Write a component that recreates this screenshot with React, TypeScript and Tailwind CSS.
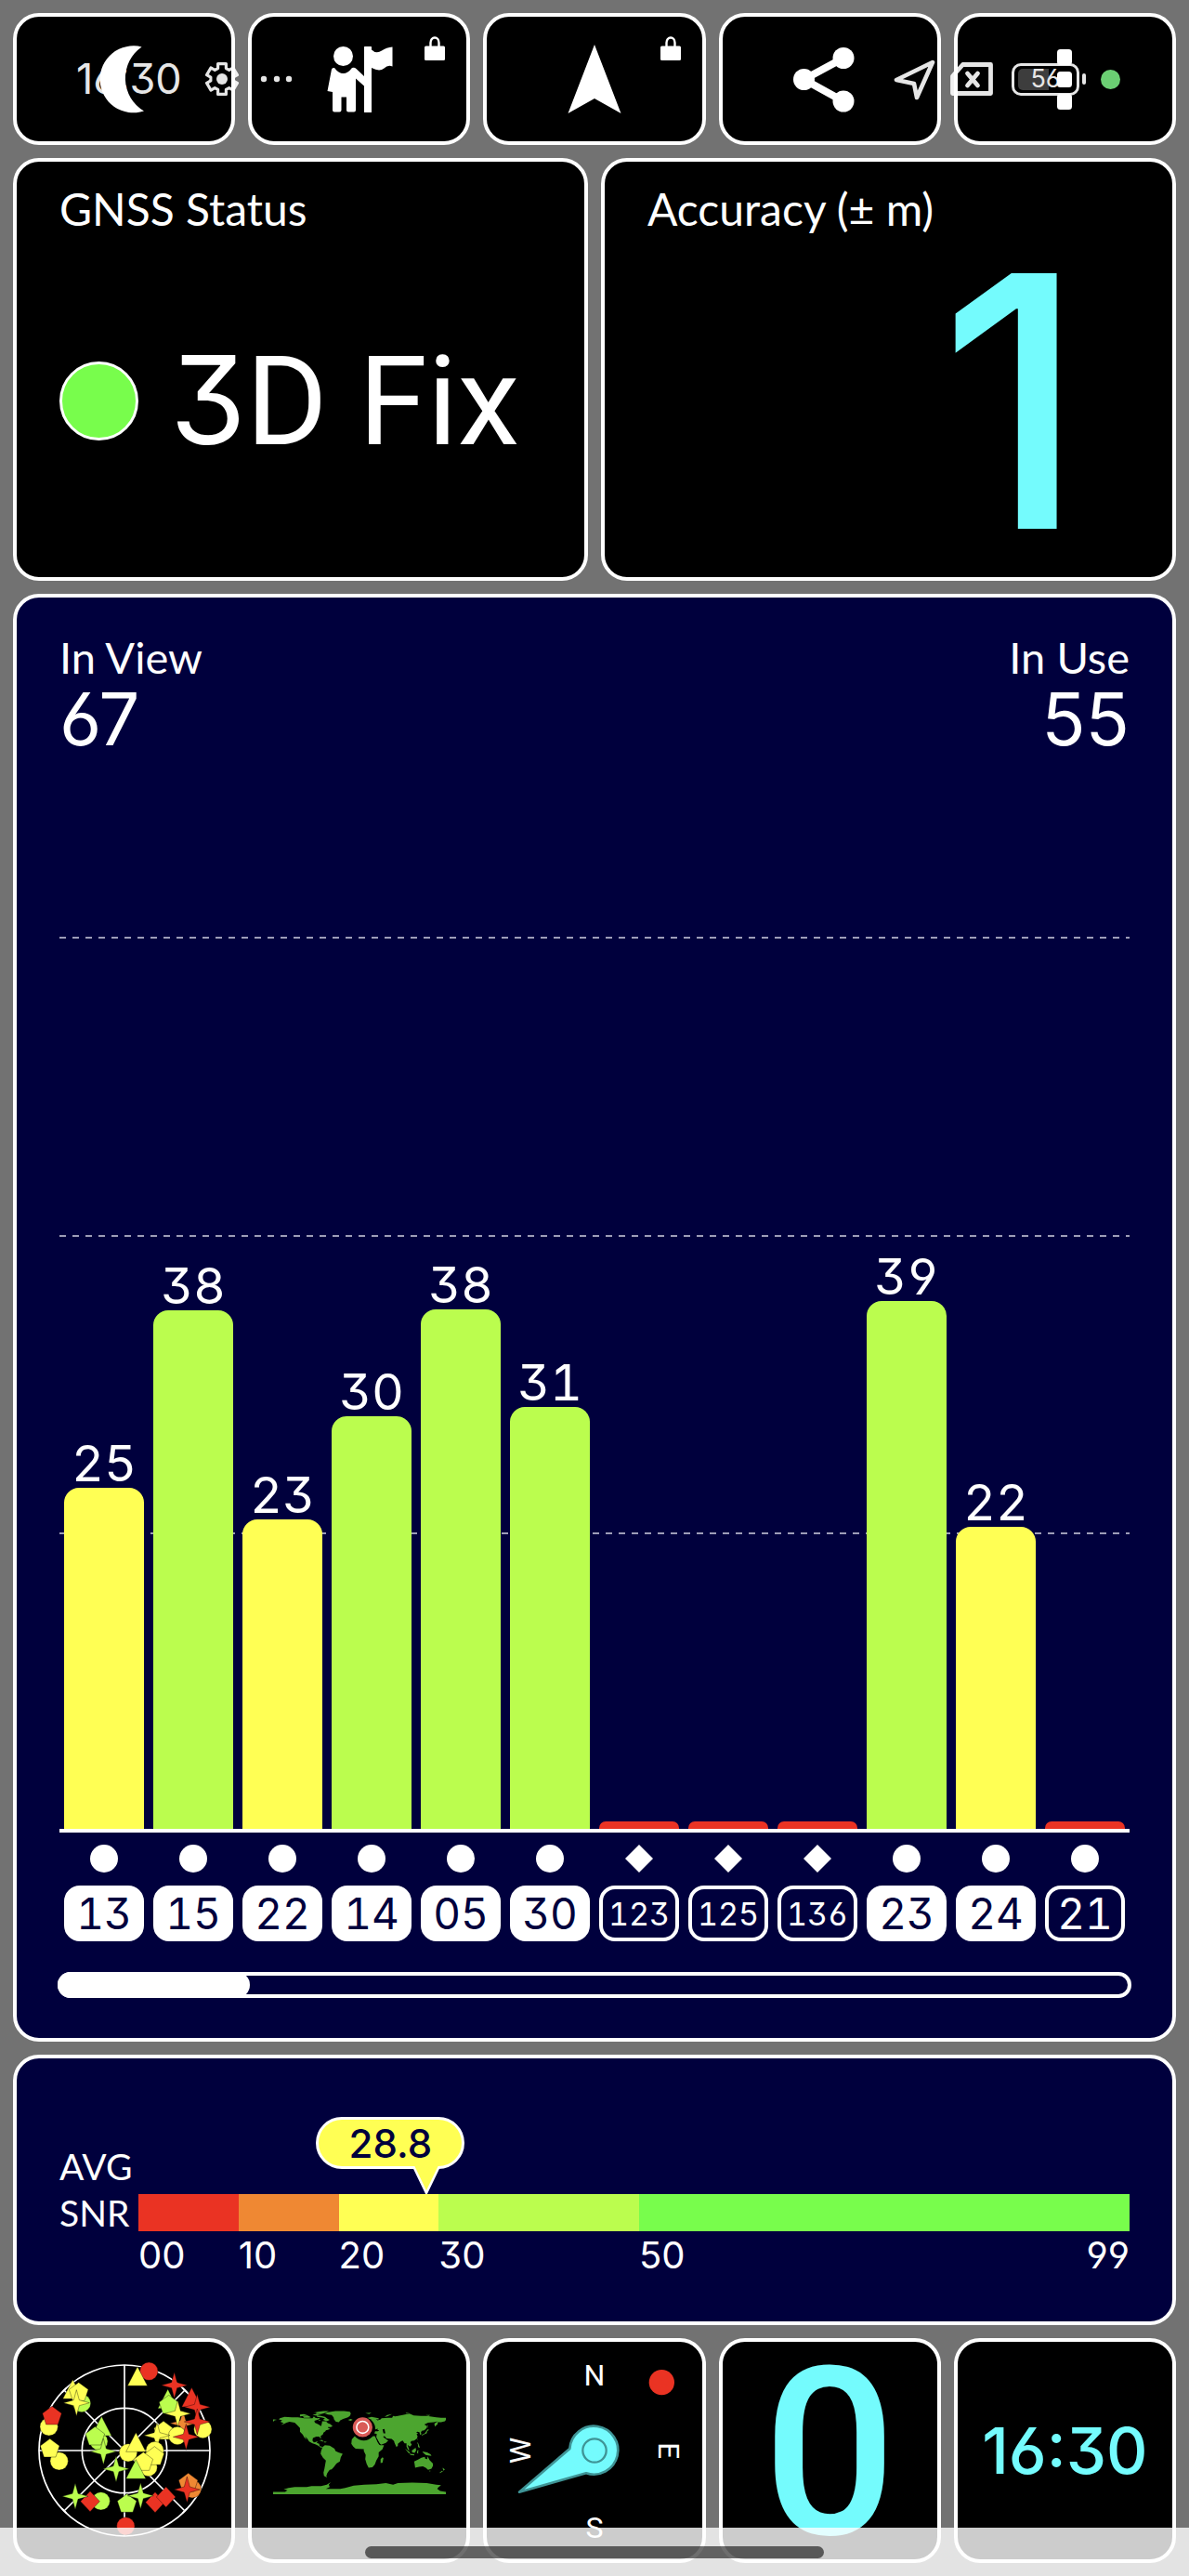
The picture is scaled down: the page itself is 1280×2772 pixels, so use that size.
import React from "react";

const DIGITS = "font-['Inter',sans-serif] [font-feature-settings:'cv09','cv03','cv04']";
const TABULAR = "font-['Inter',sans-serif] [font-feature-settings:'cv09','cv03','cv04','tnum']";

const RED = "#ea3323";
const ORANGE = "#ef8833";
const YELLOW = "#ffff54";
const LIME = "#bbfd4e";

type Sat = { id: string; snr?: number; height: number; tone: string; used: boolean; diamond?: boolean };

const sats: Sat[] = [
  { id: "13", snr: 25, height: 367, tone: "bg-[#ffff54]", used: true },
  { id: "15", snr: 38, height: 558, tone: "bg-[#bbfd4e]", used: true },
  { id: "22", snr: 23, height: 333, tone: "bg-[#ffff54]", used: true },
  { id: "14", snr: 30, height: 444, tone: "bg-[#bbfd4e]", used: true },
  { id: "05", snr: 38, height: 559, tone: "bg-[#bbfd4e]", used: true },
  { id: "30", snr: 31, height: 454, tone: "bg-[#bbfd4e]", used: true },
  { id: "123", height: 8, tone: "bg-[#ea3323]", used: false, diamond: true },
  { id: "125", height: 8, tone: "bg-[#ea3323]", used: false, diamond: true },
  { id: "136", height: 8, tone: "bg-[#ea3323]", used: false, diamond: true },
  { id: "23", snr: 39, height: 568, tone: "bg-[#bbfd4e]", used: true },
  { id: "24", snr: 22, height: 325, tone: "bg-[#ffff54]", used: true },
  { id: "21", height: 8, tone: "bg-[#ea3323]", used: false },
];

function Lock() {
  return (
    <svg className="absolute top-[21px] right-[22px] h-[27px] w-6" viewBox="0 0 24 27" aria-hidden="true">
      <path d="M7.5 12V7a4.5 5.5 0 0 1 9 0v5" fill="none" stroke="#fff" strokeWidth="2.4" />
      <rect x="1" y="10.5" width="22" height="15.5" rx="1.5" fill="#fff" />
    </svg>
  );
}

function TopTile({ label, locked, children }: { label: string; locked?: boolean; children: React.ReactNode }) {
  return (
    <button
      type="button"
      aria-label={label}
      className="relative flex h-[142px] items-center justify-center rounded-[28px] border-4 border-white bg-black"
    >
      {children}
      {locked && <Lock />}
    </button>
  );
}

function IconBox({ children }: { children: React.ReactNode }) {
  return (
    <svg className="size-[72px] overflow-visible" viewBox="0 0 72 72" fill="#fff" aria-hidden="true">
      {children}
    </svg>
  );
}

const gearPath =
  Array.from({ length: 6 }, (_, k) => {
    const p = (deg: number, r: number) => {
      const a = ((deg + k * 60 - 90) * Math.PI) / 180;
      return `${(Math.cos(a) * r).toFixed(2)} ${(Math.sin(a) * r).toFixed(2)}`;
    };
    return `${k ? "L" : "M"}${p(-21, 12.3)}L${p(-15, 17)}L${p(15, 17)}L${p(21, 12.3)}`;
  }).join("") + "Z";

function StatusBar() {
  return (
    <div className="pointer-events-none absolute inset-x-0 top-0 flex h-[170px] items-center justify-between pr-[74px] pl-[82px] opacity-90">
      <div className="flex items-center">
        <span className={`${DIGITS} w-[138px] text-[45px] leading-[56px] text-white`}>16:30</span>
        <svg className="size-[38px]" viewBox="-19 -19 38 38" aria-hidden="true">
          <path d={gearPath} fill="none" stroke="#fff" strokeWidth="3.2" strokeLinejoin="round" />
          <circle r="6" fill="#fff" />
        </svg>
        <svg className="ml-[22px] h-2 w-9" viewBox="0 0 36 8" fill="#fff" aria-hidden="true">
          <circle cx="4" cy="4" r="3.2" />
          <circle cx="18" cy="4" r="3.2" />
          <circle cx="31" cy="4" r="3.2" />
        </svg>
      </div>
      <div className="flex items-center">
        <svg className="h-[46px] w-[46px]" viewBox="0 0 46 46" fill="none" stroke="#fff" strokeWidth="4.6" strokeLinejoin="round" aria-hidden="true">
          <path d="M42 5 3 24l19 4 3 15z" />
        </svg>
        <svg className="ml-[14px] h-[38px] w-[48px]" viewBox="0 0 48 38" fill="none" stroke="#fff" strokeLinejoin="round" strokeLinecap="round" aria-hidden="true">
          <path d="M14.500 3.500H44.500V34.500H3.500V16z" strokeWidth="4.8" />
          <path d="m19.500 13 11 13m0-13-11 13" strokeWidth="4.8" />
        </svg>
        <div className="ml-[19px] flex items-center gap-[3px]">
          <div className="relative flex h-[35px] w-[73px] items-center justify-center rounded-[10px] border-[3px] border-white">
            <span className="absolute top-[3px] bottom-[3px] left-1 w-[33px] rounded-l-[5px] bg-[#444444]" />
            <span className={`${DIGITS} relative text-[27px] leading-7 text-white`}>56</span>
          </div>
          <span className="h-3 w-1 rounded-sm bg-white" />
        </div>
        <span className="ml-4 size-[21px] rounded-full bg-[#77e680]" />
      </div>
    </div>
  );
}

function StatusCard({ title, children }: { title: string; children: React.ReactNode }) {
  return (
    <section className="flex h-[455px] flex-col rounded-[28px] border-4 border-white bg-black px-[46px] pt-[23px] pb-[11px] text-white">
      <h2 className="text-[48px] leading-[56px]">{title}</h2>
      {children}
    </section>
  );
}

function SatColumn({ sat }: { sat: Sat }) {
  return (
    <li className="relative flex min-w-0 flex-1 flex-col">
      <div className="flex h-[1159px] flex-col justify-end border-b-4 border-white px-[5px]">
        {sat.snr && <span className={`${TABULAR} text-center text-[54px] leading-[52px] text-white`}>{sat.snr}</span>}
        <div
          className={`${sat.tone} ${sat.snr ? "rounded-t-[16px]" : "rounded-t-[7px]"}`}
          style={{ height: sat.height }}
        />
      </div>
      <svg className="mx-auto mt-[13px] size-[30px]" viewBox="0 0 30 30" fill="#fff" aria-hidden="true">
        {sat.diamond ? <path d="M15 0 30 15 15 30 0 15z" /> : <circle cx="15" cy="15" r="15" />}
      </svg>
      <div
        className={`${TABULAR} mx-[5px] mt-[14px] flex h-[60px] items-center justify-center rounded-[17px] border-4 border-white ${
          sat.used ? "bg-white text-[#00003d]" : "text-white"
        } ${sat.id.length > 2 ? "text-[34px]" : "text-[46px]"}`}
      >
        {sat.id}
      </div>
    </li>
  );
}

function GridLine({ className }: { className: string }) {
  return (
    <div
      className={`absolute inset-x-0 h-0.5 bg-[repeating-linear-gradient(90deg,#9d9db8_0_7px,transparent_7px_14px)] ${className}`}
    />
  );
}

const scale = [
  { from: "00", span: "flex-[10]", tone: "bg-[#ea3323]" },
  { from: "10", span: "flex-[10]", tone: "bg-[#ef8833]" },
  { from: "20", span: "flex-[10]", tone: "bg-[#ffff54]" },
  { from: "30", span: "flex-[20]", tone: "bg-[#bbfd4e]" },
  { from: "50", to: "99", span: "flex-[49]", tone: "bg-[#78fd4c]" },
];

type Shape = "circle" | "tri" | "pent" | "star" | "diamond";
const shapePaths: Record<Exclude<Shape, "circle">, string> = {
  tri: "M0-36 32 26H-32z",
  pent: "M0-31 31-8 19 28H-19L-31-8z",
  star: "M0-42 9-9 42 0 9 9 0 42-9 9-42 0-9-9z",
  diamond: "M0-33 31 0 0 33-31 0z",
};

const sky: [Shape, number, number, string][] = [
  ["circle", 480, 154, RED],
  ["tri", 443, 175, YELLOW],
  ["circle", 263, 257, LIME],
  ["tri", 234, 217, YELLOW],
  ["pent", 253, 221, YELLOW],
  ["star", 246, 256, YELLOW],
  ["circle", 157, 333, YELLOW],
  ["pent", 167, 298, RED],
  ["circle", 190, 444, YELLOW],
  ["pent", 160, 403, YELLOW],
  ["circle", 318, 380, LIME],
  ["tri", 327, 336, LIME],
  ["pent", 306, 364, LIME],
  ["star", 333, 413, LIME],
  ["star", 374, 469, LIME],
  ["star", 562, 199, RED],
  ["tri", 541, 248, LIME],
  ["pent", 544, 262, LIME],
  ["circle", 654, 341, YELLOW],
  ["star", 590, 322, ORANGE],
  ["star", 573, 291, YELLOW],
  ["tri", 618, 243, RED],
  ["star", 636, 270, RED],
  ["star", 636, 317, RED],
  ["pent", 527, 346, YELLOW],
  ["circle", 572, 362, YELLOW],
  ["star", 506, 361, YELLOW],
  ["star", 600, 366, RED],
  ["circle", 413, 417, YELLOW],
  ["circle", 499, 410, YELLOW],
  ["tri", 438, 388, YELLOW],
  ["circle", 478, 464, YELLOW],
  ["pent", 498, 428, YELLOW],
  ["pent", 462, 446, YELLOW],
  ["tri", 438, 475, LIME],
  ["circle", 620, 534, ORANGE],
  ["pent", 607, 514, ORANGE],
  ["star", 603, 536, RED],
  ["diamond", 500, 577, RED],
  ["diamond", 535, 560, RED],
  ["pent", 409, 581, LIME],
  ["star", 453, 556, LIME],
  ["circle", 325, 573, LIME],
  ["diamond", 290, 574, RED],
  ["star", 242, 558, LIME],
  ["circle", 405, 654, RED],
];

function SkyPlot() {
  return (
    <svg className="h-auto w-48" viewBox="113 122 576 576" aria-hidden="true">
      <g fill="none" stroke="#fff" strokeWidth="5">
        <circle cx="401" cy="410" r="276" />
        <circle cx="401" cy="410" r="137" />
        <path d="M401 134v552M125 410h552M206 215l390 390M206 605l390-390M588 208l14 14M588 612l14-14M200 598l14 14M200 222l14-14" />
      </g>
      {sky.map(([shape, x, y, fill], i) => (
        <g key={i} transform={`translate(${x} ${y})`} fill={fill} stroke="#000" strokeOpacity="0.35" strokeWidth="3">
          {shape === "circle" ? <circle r="29" /> : <path d={shapePaths[shape]} />}
        </g>
      ))}
    </svg>
  );
}

function WorldMap() {
  return (
    <svg className="h-auto w-[186px] overflow-visible" viewBox="-180 -90 360 180" aria-hidden="true">
      <g fill="#4ca52f">
        {/* North and Central America */}
        <path d="M-166-68-156-71-141-70-128-70-115-68-108-68-98-68-95-72-92-69-88-68-82-69-85-66-94-63-93-59-85-55-80-52-79-55-78-60-78-62-70-62-66-58-61-56-56-52-60-50-66-50-65-48-61-46-66-44-70-43-71-41-75-38-76-35-81-31-80-26-82-27-84-30-90-30-97-27-98-22-95-18-91-19-87-21-89-17-84-15-83-10-79-9-77-8-80-7-86-11-92-14-98-16-105-20-109-26-114-31-110-24-115-28-118-34-124-40-124-48-130-54-135-59-146-61-152-59-158-56-164-54-158-58-165-61-161-64-168-66z" />
        <path d="M-180-66h3l5 1-5 1-3 3z" />
        {/* Arctic islands */}
        <path d="M-124-76-116-77-110-75-106-73-116-73-124-72zM-118-72-106-73-101-70-106-69-116-69zM-98-76-90-77-80-75-92-74zM-90-74-80-73-72-71-66-67-62-65-68-62-76-65-72-68-80-70-88-71zM-96-80-86-82-75-83-64-83-70-80-80-77-90-77-90-80zM-86-66-80-63-84-63z" />
        {/* Greenland and Iceland */}
        <path d="M-72-78-66-81-50-83-32-83-20-82-18-78-20-73-24-70-34-67-40-64-43-60-49-61-53-66-54-70-58-75-66-76zM-24-65-18-67-14-65-19-63z" />
        {/* Caribbean */}
        <path d="M-85-22-79-23-74-20-77-20-82-22zM-73-20-68-19-70-18-74-18z" />
        {/* South America */}
        <path d="M-77-8-72-12-62-11-52-5-50 0-44 3-35 6-39 13-41 22-48 26-53 33-58 38-62 39-65 43-67 46-69 52-68 55-74 52-75 45-73 37-70 20-76 14-81 6-80 0z" />
        {/* Europe and Asia */}
        <path d="M-9-37-9-43-2-44-1-48-5-48 2-51 8-54 8-57 12-54 20-55 24-59 29-60 22-60 22-63 25-66 18-61 17-56 12-56 10-59 5-59 6-62 14-68 25-71 40-68 40-66 34-66 38-64 44-66 46-68 60-69 68-69 70-73 74-72 80-73 90-75 104-78 113-74 128-73 140-73 160-70 170-69 180-69 180-65 178-62 170-60 163-60 163-56 157-51 156-57 163-62 155-60 143-59 135-55 141-52 140-48 135-43 130-42 128-39 129-35 126-34 125-39 121-40 118-39 122-37 119-35 121-31 120-26 114-22 108-21 106-18 109-13 105-9 100-13 103-4 104-1 101-3 98-9 98-16 94-16 90-22 86-20 80-15 80-11 77-8 73-17 72-21 67-25 57-26 52-28 56-24 60-22 55-17 45-13 42-16 39-21 35-28 36-36 28-37 26-39 30-41 38-41 41-42 37-45 39-47 34-45 30-46 28-43 24-41 22-37 20-40 14-45 18-40 16-38 12-42 8-44 3-43 0-39-5-36z" />
        <path d="M-5-50 1-51 0-53-3-56-3-58-6-58-5-55-3-53zM-10-52-6-52-6-55-10-54zM52-71 58-75 68-77 58-72zM12-79 25-80 20-77zM96-80 104-79 98-78zM138-75 148-75 144-73z" />
        {/* Japan, Sakhalin */}
        <path d="M130-32 135-35 140-37 141-41 145-44 142-45 139-41 136-37 130-34zM142-46 143-53 142-54zM120-22 122-25 121-25z" />
        {/* Africa and Madagascar */}
        <path d="M-6-36 10-37 11-33 20-31 32-31 34-27 38-18 43-12 51-12 48-4 40 3 40 11 35 20 32 28 27 34 19 35 15 27 12 17 13 8 9 0 9-4-8-5-13-9-17-15-16-24-10-31zM44 25 48 24 50 15 48 13 44 17z" />
        {/* South-east Asia */}
        <path d="M95-5 104 2 106 6 102 4zM105 6 114 7 114 9 106 8zM109-1 117-7 118-1 115 4 110 3zM120-1 125-1 121 1 123 5 120 5zM131 1 141 3 148 7 150 10 143 9 138 8 133 4zM120-18 122-17 124-12 126-7 122-8 122-13z" />
        {/* Australia and New Zealand */}
        <path d="M114 22 122 18 129 14 136 12 137 16 141 17 142 11 146 19 153 26 153 31 150 37 143 39 138 35 132 32 124 33 116 35zM145 41 148 41 147 43zM173 35 178 38 175 41zM172 41 174 42 168 46 167 45z" />
        {/* Antarctica */}
        <path d="M-180 90V85L-155 85-150 82-158 80-148 77-135 75-110 75-100 73-80 73-68 70-60 65-64 70-62 75-70 79-40 79-30 77-12 72 10 70 35 69 55 67 70 70 80 67 110 66 140 67 160 70 170 71 164 76 162 79 168 83 180 85V90z" />
      </g>
      {/* Inland and marginal seas */}
      <path d="M48-45 52-46 54-37 50-37zM52-31 49-30 53-26 56-27zM34-28 36-27 43-13 41-13z" fill="#000" />
      <circle cx="9" cy="-46" r="24" fill="#000" />
      <circle cx="6.500" cy="-49.500" r="20.500" fill="#d95b58" />
      <circle cx="6.500" cy="-49.500" r="12.500" fill="none" stroke="#fff" strokeWidth="3" />
    </svg>
  );
}

function Compass() {
  return (
    <svg className="h-auto w-48 overflow-visible" viewBox="-288 -288 576 576" aria-hidden="true">
      <g fill="#fff" fontFamily="Roboto, sans-serif" fontWeight="400" fontSize="96" textAnchor="middle">
        <text x="0" y="-210">N</text>
        <text transform="rotate(90)" x="0" y="-208">E</text>
        <text x="0" y="281">S</text>
        <text transform="rotate(-90)" x="0" y="-207">W</text>
      </g>
      <circle cx="217" cy="-220" r="41" fill={RED} />
      <path
        d="M-243 134-80-6A78 78 0 1 1-27 73z"
        fill="#74fbfd"
        stroke="#3f9496"
        strokeWidth="8"
        strokeLinejoin="round"
      />
      <circle r="38" fill="none" stroke="#3f9496" strokeWidth="7" />
    </svg>
  );
}

function BottomTile({ label, children }: { label?: string; children: React.ReactNode }) {
  return (
    <button
      type="button"
      aria-label={label}
      className="flex h-[242px] items-center justify-center rounded-[28px] border-4 border-white bg-black text-[#74fbfd]"
    >
      {children}
    </button>
  );
}

export default function App() {
  return (
    <div className="relative min-h-screen bg-[#727272] p-[14px] font-['Lato',sans-serif]">
      <main className="flex flex-col gap-[14px]">
        <nav aria-label="Actions" className="grid grid-cols-5 gap-[14px]">
          <TopTile label="Night mode">
            <IconBox>
              <path d="M54.600 1.500A36 36 0 1 0 57 70.500 41 41 0 0 1 54.600 1.500z" />
            </IconBox>
          </TopTile>
          <TopTile label="Waypoints" locked>
            <IconBox>
              <circle cx="18.500" cy="11.500" r="10.500" />
              <path d="M6 25.500Q6.500 23.500 9 24q4.500 6 9.500 6t9.500-6q2.500-1 4.500 1l9 8.500v10.500L32 35.500V69.500q0 2-2 2H24q-2 0-2-2V55.500h-5.500V69.500q0 2-2 2H9q-2 0-2-2V50L1.500 49z" />
              <rect x="41" y="1" width="8" height="71" rx="0.500" />
              <path d="M49 4.500q5 5 11 1 5-3.500 11.500-4V22.500q-5-2-9 2-5 4-13.500-.5z" />
            </IconBox>
          </TopTile>
          <TopTile label="Navigate" locked>
            <IconBox>
              <path d="M36-1 64.500 73 36 57 7.500 73z" />
            </IconBox>
          </TopTile>
          <TopTile label="Share">
            <IconBox>
              <circle cx="8.500" cy="36.500" r="11.500" />
              <circle cx="51" cy="13.500" r="11.500" />
              <circle cx="51" cy="60" r="11.500" />
              <path d="M51 13.500 8.500 36.500 51 60" fill="none" stroke="#fff" strokeWidth="8" />
            </IconBox>
          </TopTile>
          <TopTile label="More options">
            <IconBox>
              <rect x="28" y="4" width="16" height="17" rx="3.500" />
              <rect x="28" y="28" width="16" height="17" rx="3.500" />
              <rect x="28" y="52" width="16" height="17" rx="3.500" />
            </IconBox>
          </TopTile>
        </nav>

        <div className="grid grid-cols-2 gap-[14px]">
          <StatusCard title="GNSS Status">
            <div className="flex flex-1 items-center gap-[34px]">
              <span className="size-[85px] shrink-0 rounded-full border-[3px] border-white bg-[#78fd4c]" />
              <span className="font-['Roboto',sans-serif] text-[134px] leading-[150px]">
                <span className={`${DIGITS} text-[132px]`}>3</span>D Fix
              </span>
            </div>
          </StatusCard>
          <StatusCard title="Accuracy (± m)">
            <div className="flex flex-1 items-center justify-end pr-[48px]">
              <span className={`${DIGITS} text-[378px] leading-[356px] font-medium text-[#74fbfd]`}>1</span>
            </div>
          </StatusCard>
        </div>

        <section className="rounded-[28px] border-4 border-white bg-[#00003d] px-[46px] pt-9 pb-[43px] text-white">
          <div className="flex justify-between">
            <div>
              <h2 className="text-[47px] leading-[56px]">In View</h2>
              <p className={`${DIGITS} text-[78px] leading-[78px]`}>67</p>
            </div>
            <div className="text-right">
              <h2 className="text-[47px] leading-[56px]">In Use</h2>
              <p className={`${DIGITS} text-[78px] leading-[78px]`}>55</p>
            </div>
          </div>
          <div className="relative">
            <GridLine className="top-[195px]" />
            <GridLine className="top-[516px]" />
            <GridLine className="top-[836px]" />
            <ul className="flex">
              {sats.map((sat) => (
                <SatColumn key={sat.id} sat={sat} />
              ))}
            </ul>
          </div>
          <div className="-mx-0.5 mt-[33px] h-7 rounded-[14px] border-4 border-white">
            <div className="-mx-1 -my-1 h-7 w-[18%] rounded-[14px] bg-white" />
          </div>
        </section>

        <section className="flex rounded-[28px] border-4 border-white bg-[#00003d] px-[46px] pt-[91px] pb-[45px] text-white">
          <h2 className="w-[85px] text-[39px] leading-[50px]">
            AVG
            <br />
            SNR
          </h2>
          <div className="relative mt-[55px] flex-1">
            <div className="flex">
              {scale.map((s) => (
                <div key={s.from} className={`${s.span} min-w-0`}>
                  <div className={`h-10 ${s.tone}`} />
                  <div className={`${DIGITS} flex justify-between text-[40px] leading-[52px]`}>
                    <span>{s.from}</span>
                    {s.to && <span>{s.to}</span>}
                  </div>
                </div>
              ))}
            </div>
            <div className="absolute top-[-83px]" style={{ left: `${(28.8 / 99) * 100}%` }}>
              <div
                className={`${DIGITS} -ml-[119px] flex h-14 w-[160px] items-center justify-center rounded-[28px] border-[3px] border-white bg-[#ffff54] text-[42px] font-medium text-[#00003d]`}
              >
                28.8
              </div>
              <svg className="-mt-[3px] -ml-4 h-[30px] w-8" viewBox="0 0 32 30" aria-hidden="true">
                <path d="M2 0 16 29 30 0" fill="#ffff54" stroke="#fff" strokeWidth="2.500" />
              </svg>
            </div>
          </div>
        </section>

        <nav aria-label="Pages" className="grid grid-cols-5 gap-[14px]">
          <BottomTile label="Satellite sky view">
            <SkyPlot />
          </BottomTile>
          <BottomTile label="Location map">
            <WorldMap />
          </BottomTile>
          <BottomTile label="Compass">
            <Compass />
          </BottomTile>
          <BottomTile>
            <span className="pt-2 font-['Roboto',sans-serif] text-[252px] leading-[226px] font-medium">0</span>
          </BottomTile>
          <BottomTile>
            <span className={`${DIGITS} text-[69px] leading-[80px] font-medium`}>16:30</span>
          </BottomTile>
        </nav>
      </main>

      <StatusBar />

      <div className="pointer-events-none absolute inset-x-0 bottom-0 flex h-[52px] items-start justify-center bg-white/80 pt-5">
        <div className="h-[13px] w-[494px] rounded-full bg-black/57" />
      </div>
    </div>
  );
}
